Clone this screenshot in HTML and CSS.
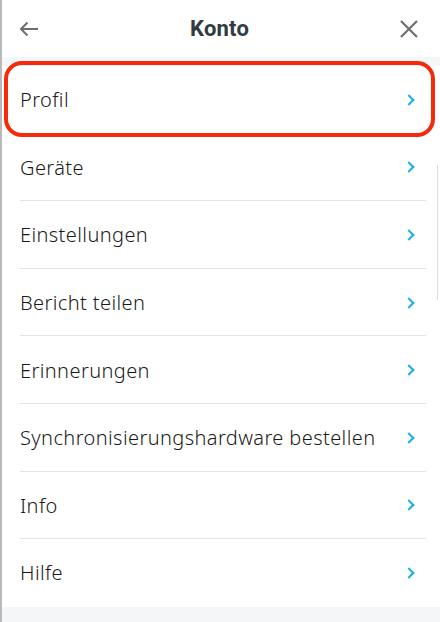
FILE: index.html
```html
<!DOCTYPE html>
<html lang="de">
  <head>
    <meta charset="UTF-8" />
    <meta name="viewport" content="width=device-width, initial-scale=1.0" />
    <title>Konto</title>
    <link rel="stylesheet" href="styles.css">
  </head>
  <body>
    <div class="sheet">
      <div class="header">
        <button class="icon-btn" aria-label="Zurück">
          <svg width="20" height="16" viewBox="0 0 20 16">
            <path d="M19 8H2M8.5 1.5L2 8l6.5 6.5" fill="none" stroke="#6e6e6e" stroke-width="2"/>
          </svg>
        </button>
        <h1>Konto</h1>
        <button class="icon-btn" aria-label="Schließen">
          <svg width="18" height="18" viewBox="0 0 18 18">
            <path d="M1 1l16 16M17 1L1 17" fill="none" stroke="#6e6e6e" stroke-width="2.2"/>
          </svg>
        </button>
      </div>
      <div class="band"></div>

      <ul class="menu">
        <li class="row highlighted">Profil</li>
        <li class="row">Geräte</li>
        <li class="row">Einstellungen</li>
        <li class="row">Bericht teilen</li>
        <li class="row">Erinnerungen</li>
        <li class="row">Synchronisierungshardware bestellen</li>
        <li class="row">Info</li>
        <li class="row last">Hilfe</li>
      </ul>
      <div class="band fill"></div>
      <div class="edge-line"></div>
    </div>
  </body>
</html>
```

FILE: styles.css
```css
html,
body {
  margin: 0;
  height: 100%;
}

body {
  background: #ffffff;
  font-family: "Noto Sans", Lato, sans-serif;
  overflow: hidden;
}

.sheet {
  position: relative;
  height: 100%;
  display: flex;
  flex-direction: column;
  border-left: 2px solid #b9b9b9;
  box-sizing: border-box;
}

.header {
  height: 57px;
  display: flex;
  align-items: center;
  justify-content: space-between;
  padding: 0 22px 0 17px;
  flex-shrink: 0;
}

.header h1 {
  margin: 0;
  font-family: Roboto, "Liberation Sans", sans-serif;
  font-weight: bold;
  font-size: 22px;
  color: #323a42;
  letter-spacing: 0.2px;
}

.icon-btn {
  background: none;
  border: none;
  padding: 0;
  display: flex;
  align-items: center;
}

.band {
  height: 9px;
  background: #f5f6f8;
  flex-shrink: 0;
}

.band.fill {
  flex: 1;
}

.menu {
  list-style: none;
  margin: 0;
  padding: 0;
}

.row {
  position: relative;
  height: 67.6px;
  display: flex;
  align-items: center;
  padding: 0 24px 0 18px;
  font-size: 20px;
  font-weight: 300;
  letter-spacing: 0.4px;
  color: #1a1a1a;
  box-sizing: border-box;
}

.row::after {
  content: "";
  position: absolute;
  left: 18px;
  right: 14px;
  bottom: 0;
  border-bottom: 1px solid #e3e3e3;
}

.row.last::after {
  display: none;
}

/* blue chevron on the right of every row */
.row::before {
  content: "";
  position: absolute;
  right: 27px;
  top: 50%;
  width: 6px;
  height: 6px;
  margin-top: -4px;
  border-top: 2.4px solid #1eaee6;
  border-right: 2.4px solid #1eaee6;
  transform: rotate(45deg);
}

.highlighted {
  z-index: 1;
}

.row.highlighted::after {
  left: 2px;
  right: 5px;
  top: -5px;
  bottom: -3px;
  border: 4px solid #f6290b;
  border-radius: 18px;
}

.edge-line {
  position: absolute;
  right: 2px;
  top: 165px;
  height: 135px;
  border-left: 1px solid #dcdcdc;
}
```
